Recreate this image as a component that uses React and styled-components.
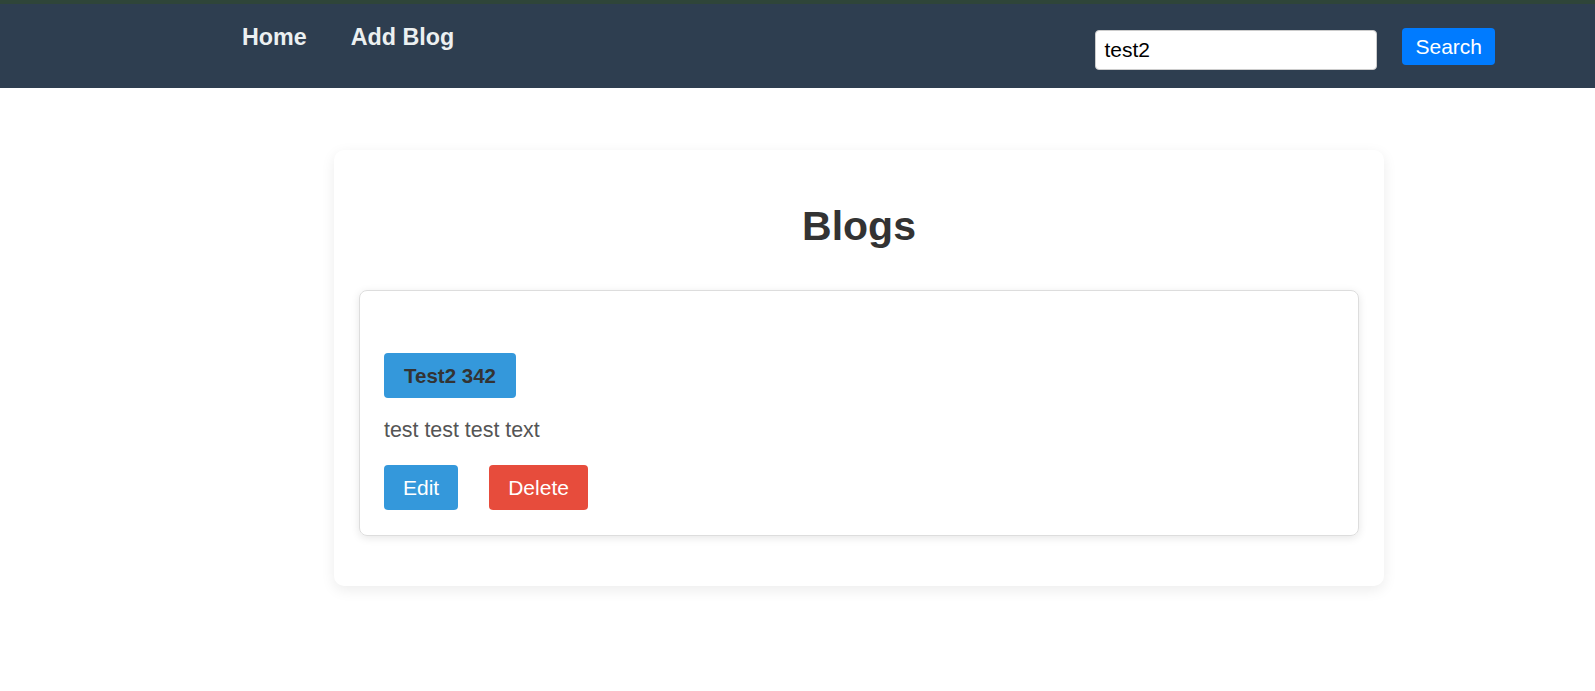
import React, { useState } from 'react'
import styled, { createGlobalStyle } from 'styled-components'

const colors = {
  navBg: '#2e3e50',
  navStrip: '#2f4539',
  navText: '#ecf0f1',
  blue: '#3498db',
  searchBlue: '#007bff',
  red: '#e74c3c',
  dark: '#333333',
  body: '#555555',
}

const GlobalStyle = createGlobalStyle`
  html, body {
    margin: 0;
    padding: 0;
    background: #ffffff;
    font-family: "Liberation Sans", Arial, sans-serif;
  }
  * {
    box-sizing: border-box;
  }
`

const blogs = [{ id: 1, title: 'Test2 342', body: 'test test test text' }]

const App = () => {
  const [query, setQuery] = useState('test2')

  return (
    <>
      <GlobalStyle />
      <Nav>
        <NavLinks>
          <NavLink href="#">Home</NavLink>
          <NavLink href="#">Add Blog</NavLink>
        </NavLinks>
        <SearchForm onSubmit={(e) => e.preventDefault()}>
          <SearchInput value={query} onChange={(e) => setQuery(e.target.value)} />
          <SearchButton type="submit">Search</SearchButton>
        </SearchForm>
      </Nav>

      <Main>
        <BlogsCard>
          <Heading>Blogs</Heading>
          {blogs.map((blog) => (
            <BlogItem key={blog.id}>
              <BlogTitle>{blog.title}</BlogTitle>
              <BlogBody>{blog.body}</BlogBody>
              <Actions>
                <ActionButton background={colors.blue}>Edit</ActionButton>
                <ActionButton background={colors.red}>Delete</ActionButton>
              </Actions>
            </BlogItem>
          ))}
        </BlogsCard>
      </Main>
    </>
  )
}

const Nav = styled.nav`
  display: flex;
  justify-content: space-between;
  align-items: flex-start;
  height: 88px;
  padding: 0 100px 0 242px;
  background: ${colors.navBg};
  border-top: 4px solid ${colors.navStrip};
`

const NavLinks = styled.div`
  display: flex;
  gap: 44px;
  padding-top: 20px;
`

const NavLink = styled.a`
  font-size: 23.3px;
  font-weight: 700;
  color: ${colors.navText};
  text-decoration: none;
`

const SearchForm = styled.form`
  display: flex;
  align-items: flex-start;
  gap: 25px;
  padding-top: 24px;
`

const SearchInput = styled.input`
  width: 282px;
  height: 40px;
  margin-top: 2px;
  padding: 0 8px;
  border: 1px solid #cccccc;
  border-radius: 4px;
  font-family: inherit;
  font-size: 21px;
  color: #000000;
  outline: none;
`

const SearchButton = styled.button`
  height: 37px;
  padding: 0 13px;
  border: none;
  border-radius: 4px;
  background: ${colors.searchBlue};
  color: #ffffff;
  font-family: inherit;
  font-size: 21px;
  cursor: pointer;
`

const Main = styled.main`
  display: flex;
  padding: 62px 0 40px 334px;
`

const BlogsCard = styled.section`
  width: 1050px;
  padding: 25px;
  background: #ffffff;
  border-radius: 10px;
  box-shadow: 0 4px 14px rgba(0, 0, 0, 0.08);
`

const Heading = styled.h2`
  margin: 28px 0 40px;
  text-align: center;
  font-size: 41px;
  font-weight: 700;
  color: ${colors.dark};
`

const BlogItem = styled.article`
  display: flex;
  flex-direction: column;
  align-items: flex-start;
  margin-bottom: 25px;
  padding: 62px 24px 25px;
  border: 1px solid #dddddd;
  border-radius: 8px;
  box-shadow: 0 2px 8px rgba(0, 0, 0, 0.1);
`

const BlogTitle = styled.h3`
  margin: 0;
  padding: 10.5px 20px;
  border-radius: 4px;
  background: ${colors.blue};
  color: ${colors.dark};
  font-size: 20.5px;
  font-weight: 700;
`

const BlogBody = styled.p`
  margin: 20px 0 22px;
  font-size: 21.4px;
  color: ${colors.body};
`

const Actions = styled.div`
  display: flex;
  gap: 31px;
`

const ActionButton = styled.button`
  padding: 10.5px 19px;
  border: none;
  border-radius: 4px;
  background: ${({ background }) => background};
  color: #ffffff;
  font-family: inherit;
  font-size: 21px;
  cursor: pointer;
`

export default App
